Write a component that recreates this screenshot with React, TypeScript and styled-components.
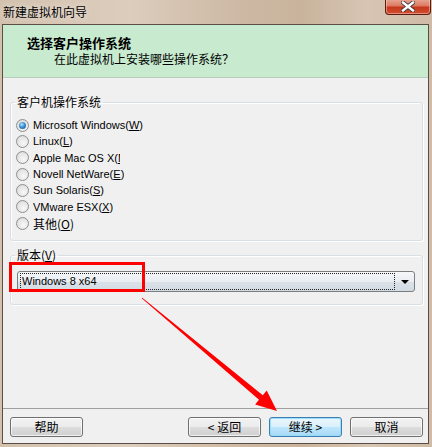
import React from "react";
import styled, { createGlobalStyle, css } from "styled-components";

const Global = createGlobalStyle`
  html, body { margin: 0; padding: 0; background: #d6c5b3; }
  body { width: 432px; height: 447px; overflow: hidden; }
`;

const UI = `"Liberation Sans", "Noto Sans CJK SC", sans-serif`;
const CJK = `"Noto Sans CJK SC", "Liberation Sans", sans-serif`;

const Window = styled.div`
  position: relative;
  width: 432px;
  height: 447px;
  box-sizing: border-box;
  padding: 0 3px 3px 2px;
  display: flex;
  flex-direction: column;
  background: linear-gradient(90deg, #d3c1ae 0%, #dccdbd 30%, #cdb9a4 55%, #c9b39c 70%, #d7c6b4 85%, #cfbba6 100%);
`;

const TitleBar = styled.div`
  height: 24px;
  flex: none;
  display: flex;
  align-items: flex-start;
  justify-content: space-between;
`;

const Title = styled.div`
  font-family: ${CJK};
  font-size: 12px;
  line-height: 16px;
  color: #000;
  padding: 4px 0 0 1px;
  text-shadow: 0 0 6px rgba(255, 255, 255, 0.8);
`;

const CloseButton = styled.div`
  width: 46px;
  height: 16px;
  margin: -1px -2px 0 0;
  box-sizing: border-box;
  border: 1px solid #5d1a10;
  border-top: none;
  border-radius: 0 0 4px 4px;
  background: linear-gradient(#e9a897 0%, #dc7a62 45%, #c6371c 55%, #d14f30 100%);
  box-shadow: inset 0 0 0 1px rgba(255, 210, 200, 0.5);
  display: flex;
  align-items: center;
  justify-content: center;
`;

const Client = styled.div`
  flex: 1;
  display: flex;
  flex-direction: column;
  border: 1px solid #5a4e46;
  background: #f0f0f0;
`;

const Header = styled.div`
  height: 52px;
  flex: none;
  background: #c8ebcf;
  border-bottom: 1px solid #b9cdbc;
  box-sizing: content-box;
  font-family: ${CJK};
  color: #000;
`;

const HeaderTitle = styled.div`
  font-size: 13px;
  font-weight: bold;
  line-height: 16px;
  padding: 10px 0 0 24px;
`;

const HeaderSub = styled.div`
  font-size: 12px;
  line-height: 16px;
  padding: 0 0 0 51px;
`;

const Body = styled.div`
  flex: 1;
  padding: 16px 5px 0 7px;
  display: flex;
  flex-direction: column;
  gap: 6px;
`;

const GroupBox = styled.fieldset<{ $pb: number }>`
  margin: 0;
  padding: 0 0 ${(p) => p.$pb}px 0;
  border: 1px solid #d5dfe5;
  border-radius: 3px;
  box-shadow: inset 1px 1px 0 #ffffff, 1px 1px 0 #ffffff;
  min-width: 0;
`;

const Legend = styled.legend`
  font-family: ${CJK};
  font-size: 12px;
  line-height: 16px;
  color: #000;
  padding: 0 2px;
  margin-left: 4px;
`;

const RadioList = styled.div`
  display: flex;
  flex-direction: column;
  padding: 7px 0 0 5px;
`;

const RadioRow = styled.label`
  height: 16.33px;
  display: flex;
  align-items: center;
  gap: 4px;
  font-family: ${UI};
  font-size: 11px;
  color: #000;
`;

const RadioDot = styled.span<{ $on?: boolean }>`
  width: 13px;
  height: 13px;
  flex: none;
  box-sizing: border-box;
  border-radius: 50%;
  border: 1px solid #8e8f8f;
  background: radial-gradient(circle at 60% 65%, #f8f8f8 0%, #e4e4e4 60%, #cfcfcf 100%);
  display: flex;
  align-items: center;
  justify-content: center;
  ${(p) =>
    p.$on &&
    css`
      &::after {
        content: "";
        width: 7px;
        height: 7px;
        border-radius: 50%;
        background: radial-gradient(circle at 40% 35%, #b8e4fc 0%, #3d8fd0 45%, #0f4f8c 100%);
      }
    `}
`;

const RadioText = styled.span<{ $clip?: number; $cjk?: boolean }>`
  white-space: nowrap;
  overflow: hidden;
  ${(p) => p.$clip && css`max-width: ${p.$clip}px;`}
  ${(p) => p.$cjk && css`font-family: ${CJK}; font-size: 12px;`}
`;

const Key = styled.span`
  text-decoration: underline;
  text-underline-offset: 1px;
`;

const Select = styled.div`
  margin: 8px 7px 0 6px;
  height: 21px;
  box-sizing: border-box;
  border: 1px solid #7a7d80;
  border-radius: 3px;
  background: linear-gradient(#f5f7f9 0%, #e9edf1 50%, #dae2e8 51%, #d3dce3 100%);
  display: flex;
  align-items: center;
  padding: 0 0 0 2px;
`;

const SelectValue = styled.div`
  flex: 1;
  height: 15px;
  border: 1px dotted #222;
  font-family: ${UI};
  font-size: 11px;
  line-height: 15px;
  color: #000;
  padding-left: 1px;
`;

const SelectArrow = styled.div`
  width: 19px;
  display: flex;
  justify-content: center;
  align-items: center;
`;

const Footer = styled.div`
  flex: none;
  border-top: 1px solid #a0a0a0;
  padding: 8px 5px 6px 7px;
  display: flex;
  gap: 8px;
`;

const Spacer = styled.div`
  flex: 1;
`;

const Button = styled.div<{ $primary?: boolean }>`
  width: 73px;
  height: 20px;
  box-sizing: border-box;
  border: 1px solid #707070;
  border-radius: 3px;
  background: linear-gradient(#f2f2f2 0%, #ebebeb 50%, #dddddd 51%, #cfcfcf 100%);
  box-shadow: inset 0 0 0 1px rgba(255, 255, 255, 0.7);
  font-family: ${CJK};
  font-size: 12px;
  line-height: 18px;
  text-align: center;
  color: #000;
  ${(p) =>
    p.$primary &&
    css`
      border-color: #3c7fb1;
      background: linear-gradient(#eaf6fd 0%, #d9f0fc 50%, #bee6fd 51%, #a7d9f5 100%);
      box-shadow: inset 0 0 0 1px rgba(150, 220, 250, 0.9);
    `}
`;

const Overlay = styled.svg`
  position: absolute;
  left: 0;
  top: 0;
  width: 432px;
  height: 447px;
  pointer-events: none;
`;

const options: { label: string; key: string; on?: boolean; clip?: number; cjk?: boolean }[] = [
  { label: "Microsoft Windows(", key: "W", on: true },
  { label: "Linux(", key: "L" },
  { label: "Apple Mac OS X(", key: "M", clip: 87 },
  { label: "Novell NetWare(", key: "E" },
  { label: "Sun Solaris(", key: "S" },
  { label: "VMware ESX(", key: "X" },
  { label: "其他(", key: "O", cjk: true },
];

export default function App() {
  return (
    <>
      <Global />
      <Window>
        <TitleBar>
          <Title>新建虚拟机向导</Title>
          <CloseButton>
            <svg width="14" height="11" viewBox="0 0 14 11">
              <path d="M2 1.5 L12 9.5 M12 1.5 L2 9.5" stroke="#3a3a3a" strokeWidth="4.2" strokeLinecap="square" />
              <path d="M2 1.5 L12 9.5 M12 1.5 L2 9.5" stroke="#ffffff" strokeWidth="2.4" strokeLinecap="square" />
            </svg>
          </CloseButton>
        </TitleBar>
        <Client>
          <Header>
            <HeaderTitle>选择客户操作系统</HeaderTitle>
            <HeaderSub>在此虚拟机上安装哪些操作系统？</HeaderSub>
          </Header>
          <Body>
            <GroupBox $pb={9}>
              <Legend>客户机操作系统</Legend>
              <RadioList>
                {options.map((o) => (
                  <RadioRow key={o.key}>
                    <RadioDot $on={o.on} />
                    <RadioText $clip={o.clip} $cjk={o.cjk}>
                      {o.label}
                      <Key>{o.key}</Key>
                      {o.clip ? "" : ")"}
                    </RadioText>
                  </RadioRow>
                ))}
              </RadioList>
            </GroupBox>
            <GroupBox $pb={12}>
              <Legend>
                版本(<Key>V</Key>)
              </Legend>
              <Select>
                <SelectValue>Windows 8 x64</SelectValue>
                <SelectArrow>
                  <svg width="8" height="4" viewBox="0 0 8 4">
                    <path d="M0 0 H8 L4 4 Z" fill="#000" />
                  </svg>
                </SelectArrow>
              </Select>
            </GroupBox>
          </Body>
          <Footer>
            <Button>帮助</Button>
            <Spacer />
            <Button>&lt; 返回</Button>
            <Button $primary>继续 &gt;</Button>
            <Button>取消</Button>
          </Footer>
        </Client>
        <Overlay viewBox="0 0 432 447">
          <rect x="10.5" y="263.5" width="133" height="27" fill="none" stroke="#ff0000" strokeWidth="3" />
          <polygon
            points="141.7,298.3 142.3,297.7 262.8,395.2 266.7,390.6 277,411 255.1,404.4 259,399.8"
            fill="#ff0000"
          />
        </Overlay>
      </Window>
    </>
  );
}
